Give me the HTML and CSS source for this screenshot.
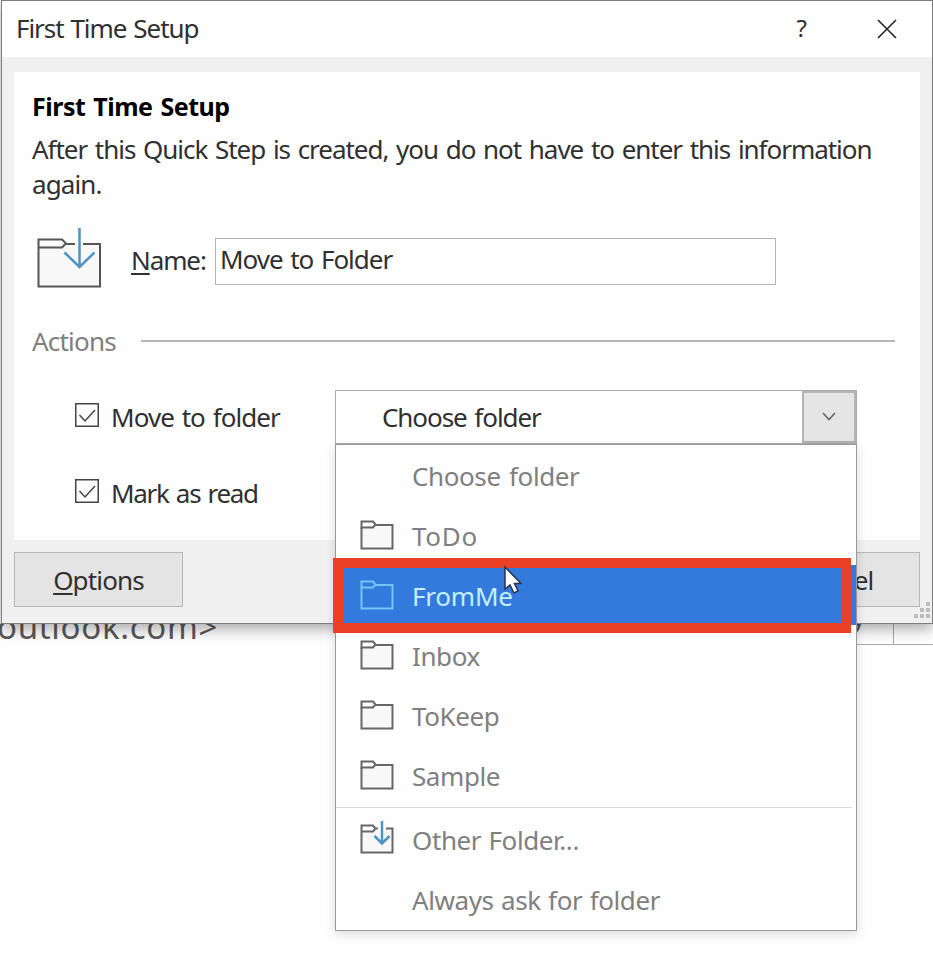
FILE: index.html
```html
<!DOCTYPE html>
<html lang="en">
<head>
<meta charset="utf-8">
<title>First Time Setup</title>
<link rel="stylesheet" href="styles.css">
</head>
<body>
<svg class="defs" aria-hidden="true">
  <symbol id="folder" viewBox="0 0 34 30">
    <path class="paper" d="M1.5 7.5V28.5H32.5V5H14"/>
    <path d="M1.5 1.5H13L15.5 4.5L13 7.5H1.5Z"/>
    <path d="M15.5 5H32.5V28.5H1.5V7.5"/>
  </symbol>
</svg>
<main class="dialog">
  <header class="titlebar">
    <span class="title">First Time Setup</span>
    <span class="help">?</span>
    <svg class="close" viewBox="0 0 20 20"><path d="M1 1L19 19M19 1L1 19"/></svg>
  </header>
  <section class="panel">
    <h1>First Time Setup</h1>
    <p class="intro"><span class="line1">After this Quick Step is created, you do not have to enter this information</span><br><span class="line2">again.</span></p>
    <div class="name-row">
      <svg class="big-folder" viewBox="0 0 66 62">
        <path class="fill" d="M3 20V59H64V17H3Z"/>
        <path d="M2.5 12.5H26L30 16.5L26 20.5H2.5ZM30 17H39M47 17H64V59.5H2.5V12.5"/>
        <path class="arrow" d="M43.5 1V39M28.5 25.5L43.5 40L58.5 25.5"/>
      </svg>
      <label class="name-label"><u>N</u>ame:</label>
      <div class="input"><span class="name-value">Move to Folder</span></div>
    </div>
    <div class="section"><span class="actions">Actions</span><i></i></div>
    <div class="choices">
      <div class="checks">
        <div class="check"><svg viewBox="0 0 24 24"><rect x=".75" y=".75" width="22.5" height="22.5"/><path d="M4.5 12L10 18L20 7"/></svg><span class="move">Move to folder</span></div>
        <div class="check"><svg viewBox="0 0 24 24"><rect x=".75" y=".75" width="22.5" height="22.5"/><path d="M4.5 12L10 18L20 7"/></svg><span class="mark">Mark as read</span></div>
      </div>
      <div class="combo">
        <div class="combo-text"><span class="chosen">Choose folder</span></div>
        <div class="combo-button"><svg viewBox="0 0 14 9"><path d="M1 1L7 7.5L13 1"/></svg></div>
        <div class="menu">
          <div class="item"><b></b><span class="m1">Choose folder</span></div>
          <div class="item"><svg><use href="#folder"/></svg><span class="m2">ToDo</span></div>
          <div class="item selected"><svg><use href="#folder"/></svg><span class="m3">FromMe</span>
            <div class="highlight"></div>
            <svg class="cursor" viewBox="0 0 18 26"><path d="M1 -1V21L6 17L10 25L14 23L10.5 15.5H17Z"/></svg>
          </div>
          <div class="item"><svg><use href="#folder"/></svg><span class="m4">Inbox</span></div>
          <div class="item"><svg><use href="#folder"/></svg><span class="m5">ToKeep</span></div>
          <div class="item"><svg><use href="#folder"/></svg><span class="m6">Sample</span></div>
          <hr>
          <div class="item"><svg viewBox="0 0 34 34"><path class="paper" d="M1.5 11V32.5H32.5V9"/><path d="M1.5 5.5H13L15.5 8.5L13 11.5H1.5ZM15.5 8.5H18M26 8.5H32.5V32.5H1.5V11"/><path class="arrow" d="M22 1V23M14.5 16L22 23.5L29.5 16"/></svg><span class="m7">Other Folder...</span></div>
          <div class="item"><b></b><span class="m8">Always ask for folder</span></div>
        </div>
      </div>
    </div>
  </section>
  <footer>
    <div class="button"><span class="options"><u>O</u>ptions</span></div>
    <div class="button"><span class="cancel">Cancel</span></div>
    <svg class="grip" viewBox="0 0 17 17"><path d="M13 0h4v4h-4zM7 6h4v4h-4zM13 6h4v4h-4zM1 12h4v4h-4zM7 12h4v4h-4zM13 12h4v4h-4z"/></svg>
  </footer>
</main>
<div class="behind"><span class="address">outlook.com&gt;</span><span class="tail">y</span><i></i></div>
</body>
</html>
```
FILE: styles.css
```css
* { box-sizing: border-box; }
body { margin: 0; width: 933px; height: 969px; overflow: hidden; background: #fefefe; color: #303030; font: 26px/34px "Noto Sans", "Open Sans", sans-serif; }
.defs { position: absolute; width: 0; height: 0; }
svg { display: block; flex: none; fill: none; overflow: visible; }
span { white-space: nowrap; }
u { text-decoration-thickness: 1.5px; text-underline-offset: 3px; }
.dialog { position: relative; z-index: 1; margin-left: 1px; width: 932px; height: 624px; border: 1.5px solid #7d7d7d; background: #f0f0f0; box-shadow: 0 5px 14px #0005; padding: 0 12px; }
.titlebar { display: flex; align-items: center; height: 56px; margin: 0 -12px 15px; padding: 0 35px 0 14px; background: #fff; }
.title { margin-top: -2px; letter-spacing: -1.05px; word-spacing: 1.2px; }
.help { margin: -2px 70px 0 auto; font-size: 24px; }
.close { width: 20px; height: 20px; stroke: #222; stroke-width: 1.6; }
.panel { height: 468px; background: #fefefe; padding: 16px 25px 0 18px; }
h1 { margin: 0; font-size: 25px; line-height: 36px; font-weight: 700; letter-spacing: -.5px; word-spacing: 2px; color: #000; }
.intro { margin: 8px 0 0; line-height: 35px; }
.line1 { letter-spacing: -1.04px; word-spacing: 2px; }
.line2 { letter-spacing: -.9px; }
.name-row { display: flex; align-items: center; height: 66px; margin-top: 23px; }
.big-folder { width: 66px; height: 62px; margin: -1px 0 0 4px; stroke: #555; stroke-width: 2; }
.fill, .paper { fill: #f8f8f8; stroke: none; }
svg .arrow { stroke: #4d94c4; stroke-width: 2.5; }
.name-label { width: 76px; margin: 4px 8px 0 29px; letter-spacing: -1.1px; }
.input { width: 561px; height: 47px; margin-top: 7px; border: 1.5px solid #b4b4b4; padding: 3px 4px; background: #fff; }
.name-value { letter-spacing: -1px; word-spacing: 1.8px; }
.section { display: flex; align-items: center; height: 34px; margin-top: 33px; color: #808080; }
.section span { width: 109px; letter-spacing: -.8px; }
.section i { flex: 1; height: 1.5px; background: #b7b7b7; }
.choices { display: flex; margin-top: 32px; }
.checks { width: 303px; padding: 9px 0 0 43px; }
.check { display: flex; align-items: center; gap: 12px; height: 34px; margin-bottom: 42px; }
.check svg { width: 24px; height: 24px; margin-top: -2px; stroke: #444; stroke-width: 1.5; }
.check span { margin-top: 1px; }
.move { letter-spacing: -.95px; word-spacing: 2px; }
.mark { letter-spacing: -1.3px; word-spacing: 1.8px; }
.combo { position: relative; display: flex; flex: none; width: 522px; height: 54px; border: 1.5px solid #aaa; background: #fff; }
.combo-text { flex: 1; padding: 9px 0 0 46px; }
.chosen { letter-spacing: -1.07px; word-spacing: 2px; }
.combo-button { width: 54px; border: 2px solid #b4b4b4; background: #e5e5e5; display: flex; align-items: center; justify-content: center; }
.combo-button svg { width: 14px; height: 9px; margin-top: -2px; stroke: #666; stroke-width: 1.7; }
.menu { position: absolute; z-index: 2; left: -1px; top: 53px; width: 522px; height: 487px; border: 1.5px solid #999; background: #fefefe; color: #808080; box-shadow: 0 3px 10px #0002; }
.item { position: relative; display: flex; align-items: center; height: 60px; padding-left: 24px; gap: 18px; }
.item > svg:first-child { width: 34px; height: 30px; stroke: #666; stroke-width: 2; }
.item > svg[viewBox] { height: 34px; margin-top: -4px; }
.item b { width: 34px; }
.item span { margin-top: 2px; }
.m1 { letter-spacing: -.4px; word-spacing: 2px; }
.m2 { letter-spacing: .7px; }
.m3 { letter-spacing: -.2px; }
.m4, .m5, .m6 { letter-spacing: -.4px; }
.m7, .m8 { letter-spacing: -.4px; word-spacing: 1px; }
.menu hr { margin: 2px 4px 1px 0; border: 0; height: 1px; background: #dadada; }
.selected { background: #3479dc; color: #c4f0ff; }
.selected > svg:first-child { stroke: #76c3f5; }
.paper { fill: var(--paper, #f8f8f8); }
.selected { --paper: none; }
.highlight { position: absolute; left: -3px; top: -7px; width: 518px; height: 75px; border: 10px solid #eb4026; }
.item > .cursor { position: absolute; left: 168px; top: 3px; width: 18px; height: 26px; margin: 0; overflow: hidden; fill: #fff; stroke: #26364e; stroke-width: 1.5; }
footer { position: relative; display: flex; justify-content: space-between; margin-top: 12px; }
.button { width: 169px; height: 55px; border: 1.5px solid #b7b7b7; background: #e4e4e4; display: flex; align-items: center; justify-content: center; }
.options, .cancel { letter-spacing: -.85px; margin-top: 1px; }
.grip { position: absolute; right: -10px; bottom: -12px; width: 17px; height: 17px; }
.grip path { fill: #bdbdbd; }
.behind { display: flex; height: 21px; position: relative; color: #5a5a5a; }
.behind span { margin-top: -15px; }
.behind .address { width: 820px; margin-left: -3px; font-size: 33px; letter-spacing: .7px; line-height: 36px; }
.behind .tail { margin-left: 35px; margin-top: -24px; }
.behind i { position: absolute; left: 856px; right: 0; height: 21px; border-bottom: 1.5px solid #aaa; background: linear-gradient(90deg, transparent 37px, #aaa 37px, #aaa 38.5px, transparent 38.5px); }
```
